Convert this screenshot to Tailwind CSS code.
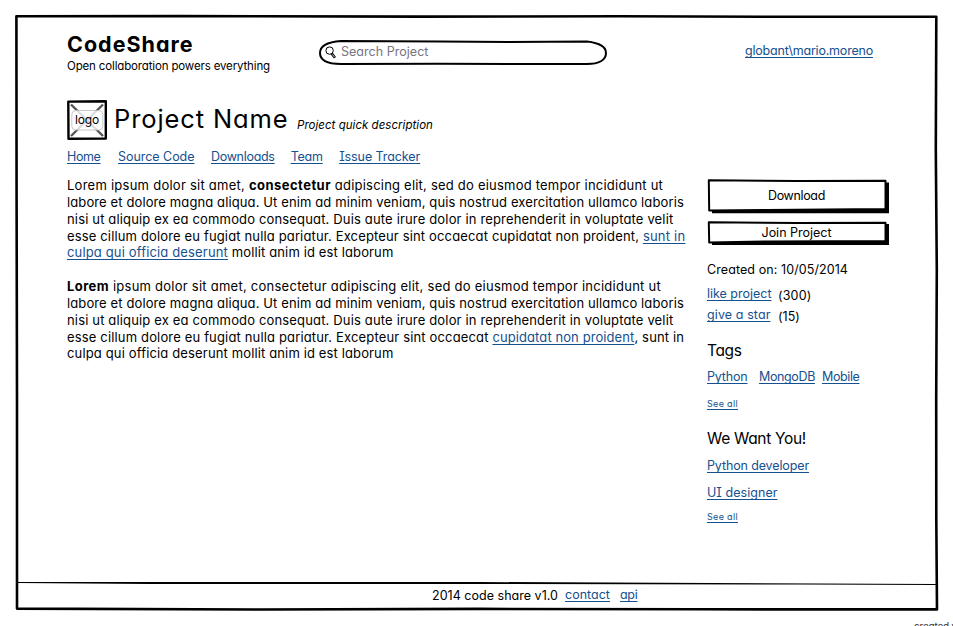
<!DOCTYPE html>
<html lang="en">
<head>
<meta charset="utf-8">
<title>CodeShare</title>
<script src="https://cdn.jsdelivr.net/npm/@tailwindcss/browser@4"></script>
</head>
<body class="relative h-[626px] w-[953px] overflow-hidden bg-white font-['Inter','Noto_Sans',sans-serif] text-[12.5px] leading-[17px] whitespace-pre text-black [font-feature-settings:'cv11','cv08'] [font-optical-sizing:none] [&_a]:text-[#15508f] [&_a]:underline [&_a]:decoration-1 [&_a]:underline-offset-[2px] [&_a]:[text-decoration-skip-ink:none]"><svg class="pointer-events-none absolute inset-0" width="953" height="626" viewBox="0 0 953 626" fill="none" stroke="#000" stroke-linejoin="round"><path stroke-width="2.6" d="M16.4 16.2 L180 16.1 L420 16.6 L620 16.3 L780 16.8 L936.3 16.8 L935.8 150 L936.8 270 L936.2 400 L936.3 520 L937 609.4 L700 609.3 L480 608.9 L260 609.5 L17 608.6 L17 400 L16.6 200 Z"/><path fill="#000" stroke="none" d="M17 582 L480 582 L936 583.9 L936 584.9 L800 584.5 L480 584 L150 584 L17 582.9 Z"/></svg><div class="flex h-full flex-col pt-[32px] pl-[67px]"><header class="flex h-[69px] w-[806px] shrink-0 items-start"><div class="w-[252px]"><h1 class="text-[21.5px] leading-[24px] font-bold tracking-[1px]">CodeShare</h1><p class="mt-[3px] text-[11.5px] leading-[14px] tracking-[-0.148px]">Open collaboration powers everything</p></div><div class="relative mt-[8px] flex h-[25px] w-[288px] pt-[3px] pl-[22px] text-[#777480]"><svg class="absolute inset-0" width="288" height="25" viewBox="0 0 288 25" fill="none" stroke="#000"><path stroke-width="2" d="M22 1 L120 1.6 L190 1.9 L268 1.6 C280 3 287 7 287 13 C287 20 280 24 268 24 L120 23.8 L22 24 C6 24 1 19 1 13 C1 6 8 2 22 1 Z"/><circle cx="10.6" cy="10.6" r="3.7" stroke-width="1"/><path stroke-width="2.6" d="M12.8 13.6 L16 17.8"/><path stroke="#fff" stroke-width=".8" d="M13.4 14.4 L15.5 17.2"/></svg><span class="relative tracking-[0.032px]">Search Project</span></div><a class="mt-[10px] ml-auto tracking-[-0.206px]">globant\mario.moreno</a></header><section class="flex h-[47px] shrink-0 items-start"><div class="relative -mt-px flex h-[40px] w-[40px] items-center justify-center"><svg class="absolute inset-0" width="40" height="40" viewBox="0 0 40 40" fill="none"><path stroke="#555" stroke-width="2.4" d="M4 4.5 L36 36 M36 4.5 L4 36"/><rect x="4.8" y="10.5" width="31" height="19.5" rx="4" fill="#fff" fill-opacity=".8" stroke="#bbb" stroke-width=".8"/><path stroke="#000" stroke-width="2.4" stroke-linejoin="round" d="M1.3 1.6 L38.8 1.2 L38.8 38.6 L1.5 38.8 Z"/></svg><span class="relative text-[12px] leading-[14px] tracking-[-0.168px]">logo</span></div><h2 class="mt-[2px] ml-[7px] w-[183px] text-[25.5px] leading-[32px] tracking-[0.88px]">Project Name</h2><p class="mt-[17px] text-[11.5px] leading-[14px] tracking-[0.033px] italic">Project quick description</p></section><nav class="flex h-[29px] shrink-0"><a class="tracking-[-0.384px]">Home</a><a class="ml-[17.5px] tracking-[-0.04px]">Source Code</a><a class="ml-[16.5px] tracking-[-0.294px]">Downloads</a><a class="ml-[16px] tracking-[-0.248px]">Team</a><a class="ml-[16.5px] tracking-[-0.088px]">Issue Tracker</a></nav><div class="flex h-[410px] shrink-0"><main class="w-[640px] text-[13px] leading-[16.85px]"><p><span class="block tracking-[0.215px]"><span class="tracking-[0.252px]">Lorem ipsum dolor sit amet, </span><b class="tracking-[0.46px]">consectetur</b> adipiscing elit, sed do eiusmod tempor incididunt ut</span><span class="block tracking-[0.114px]">labore et dolore magna aliqua. Ut enim ad minim veniam, quis nostrud exercitation ullamco laboris</span><span class="block tracking-[0.159px]">nisi ut aliquip ex ea commodo consequat. Duis aute irure dolor in reprehenderit in voluptate velit</span><span class="block tracking-[0.149px]">esse cillum dolore eu fugiat nulla pariatur. Excepteur sint occaecat cupidatat non proident, <a class="tracking-[0.217px]">sunt in</a></span><span class="block tracking-[0.13px]"><a class="tracking-[0.151px]">culpa qui officia deserunt</a> mollit anim id est laborum</span></p><p class="mt-[16.85px]"><span class="block tracking-[0.25px]"><b class="tracking-[0.416px]">Lorem</b> ipsum dolor sit amet, consectetur adipiscing elit, sed do eiusmod tempor incididunt ut</span><span class="block tracking-[0.114px]">labore et dolore magna aliqua. Ut enim ad minim veniam, quis nostrud exercitation ullamco laboris</span><span class="block tracking-[0.159px]">nisi ut aliquip ex ea commodo consequat. Duis aute irure dolor in reprehenderit in voluptate velit</span><span class="block tracking-[0.157px]">esse cillum dolore eu fugiat nulla pariatur. Excepteur sint occaecat <a class="tracking-[0.089px]">cupidatat non proident</a>, sunt in</span><span class="block tracking-[0.13px]"><span class="tracking-[0.151px]">culpa qui officia deserunt</span> mollit anim id est laborum</span></p></main><aside class="w-[185px] pt-[2px]"><button class="relative flex h-[35px] w-[182px] items-center justify-center pr-[3px] pb-[2px]"><svg class="absolute inset-0" width="182" height="35" viewBox="0 0 182 35"><path d="M5 3.5 H182 V34.3 H5 Z"/><path fill="#fff" stroke="#000" stroke-width="2" stroke-linejoin="round" d="M1.8 1.2 L90 2 L178.5 1.7 L178.5 30 L60 31 L2.2 31.5 Z"/></svg><span class="relative tracking-[-0.344px]">Download</span></button><button class="relative mt-[7px] flex h-[24px] w-[182px] items-center justify-center pr-[3px] pb-[2px]"><svg class="absolute inset-0" width="182" height="24" viewBox="0 0 182 24"><path d="M5 3 H182 V24 H5 Z"/><path fill="#fff" stroke="#000" stroke-width="2" stroke-linejoin="round" d="M1.8 1.2 L90 2 L178.5 1.7 L178.5 20 L60 20.5 L2.2 21.5 Z"/></svg><span class="relative tracking-[-0.008px]">Join Project</span></button><p class="mt-[16px] tracking-[0.084px]">Created on: 10/05/2014</p><div class="mt-[7px] flex"><a class="tracking-[-0.013px]">like project</a><span class="mt-[2px] ml-[6.5px] tracking-[0.176px]">(300)</span></div><div class="mt-[2px] flex"><a class="tracking-[0.1px]">give a star</a><span class="mt-[2px] ml-[7.5px] tracking-[0.046px]">(15)</span></div><h3 class="mt-[16px] text-[15.5px] leading-[20px] tracking-[-0.37px]">Tags</h3><div class="mt-[7px] flex"><a class="tracking-[-0.179px]">Python</a><a class="ml-[11.5px] tracking-[-0.364px]">MongoDB</a><a class="ml-[7px] tracking-[-0.383px]">Mobile</a></div><div class="mt-[13px] text-[9px] leading-[12px]"><a class="tracking-[0.33px]">See all</a></div><h3 class="mt-[19px] text-[15.5px] leading-[20px] tracking-[-0.31px]">We Want You!</h3><div class="mt-[8px]"><a class="tracking-[-0.127px]">Python developer</a></div><div class="mt-[10px]"><a class="tracking-[0.05px]">UI designer</a></div><div class="mt-[10px] text-[9px] leading-[12px]"><a class="tracking-[0.33px]">See all</a></div></aside></div><footer class="flex shrink-0 pl-[365px]"><span class="tracking-[0.024px]">2014 code share v1.0</span><a class="-mt-px ml-[7px] tracking-[0.016px]">contact</a><a class="-mt-px ml-[10px] tracking-[-0.28px]">api</a></footer><p class="mt-[16px] ml-[847px] shrink-0 text-[10px] leading-[12px] tracking-[-0.201px] text-[#333]">created with</p></div></body>
</html>
